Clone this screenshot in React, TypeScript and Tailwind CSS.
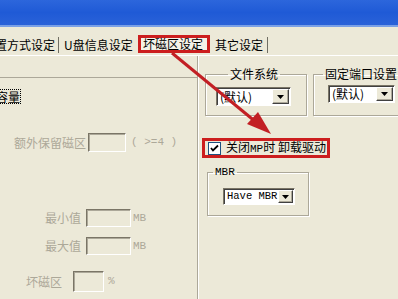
import React from "react";

const cjk = "font-['SimSun','Noto_Sans_CJK_SC',sans-serif]";
const mono = "font-['Liberation_Mono',monospace]";

function Sunken({ w, h, white }: { w: string; h: string; white?: boolean }) {
  return (
    <div
      className={`${w} ${h} shrink-0 border-t border-l border-t-[#7a7566] border-l-[#7a7566] border-b border-r border-b-white border-r-white ${
        white ? "bg-white" : "bg-[#ece9d8]"
      } shadow-[inset_1px_1px_0_#aca899]`}
    />
  );
}

function Combo({ label, w, h, labelClass }: { label: string; w: string; h?: string; labelClass?: string }) {
  return (
    <div
      className={`${w} ${h ?? "h-[19px]"} shrink-0 flex items-stretch bg-white border-t border-l border-t-[#7a7566] border-l-[#7a7566] border-b border-r border-b-white border-r-white shadow-[inset_1px_1px_0_#404040]`}
    >
      <div className={`flex-1 flex items-center pl-[3px] leading-none ${labelClass ?? ""}`}>{label}</div>
      <div className="w-[17px] m-[1px] flex items-center justify-center bg-[#ece9d8] border-t border-l border-t-white border-l-white border-b border-r border-b-[#404040] border-r-[#404040] shadow-[inset_-1px_-1px_0_#aca899]">
        <svg width="7" height="4" viewBox="0 0 7 4">
          <path d="M0 0h7L3.5 4z" fill="#000" />
        </svg>
      </div>
    </div>
  );
}

function Group({
  title,
  className,
  children,
  titleClass,
}: {
  title: string;
  className?: string;
  children: React.ReactNode;
  titleClass?: string;
}) {
  return (
    <fieldset
      className={`shrink-0 border border-[#aca899] shadow-[inset_1px_1px_0_#fff,1px_1px_0_#fff] ${className ?? ""}`}
    >
      <legend className={`px-[2px] leading-none whitespace-nowrap ${titleClass ?? ""}`}>{title}</legend>
      {children}
    </fieldset>
  );
}

function Tabs() {
  return (
    <div className="h-[28px] flex items-end">
      <div className="h-[16px] mb-[2px] w-[64px] shrink-0 ml-[-5px] border-r border-r-[#716f64] flex items-center leading-none">
        置方式设定
      </div>
      <div className="h-[16px] mb-[2px] w-[79px] shrink-0 pl-[5px] flex items-center leading-none">U盘信息设定</div>
      <div className="h-[18px] mb-[2px] w-[72px] shrink-0 border-[3px] border-[#cc1e1e] flex items-center pl-[2px] leading-none bg-[#f4f2e8]">
        坏磁区设定
      </div>
      <div className="h-[16px] mb-[2px] w-[58px] shrink-0 pl-[5px] border-r border-r-[#716f64] flex items-center leading-none">
        其它设定
      </div>
    </div>
  );
}

function LeftPanel() {
  const dis = "text-[#aca899]";
  return (
    <div className="w-[198px] shrink-0 h-full border-r border-r-[#aca899] shadow-[1px_0_0_#fff] flex flex-col">
      <div className="mt-[21px] border-t border-t-[#aca899] shadow-[inset_0_1px_0_#fff]" />
      <div className="mt-[11px] ml-[-6px] w-[27px] h-[15px] border border-dotted border-black flex items-center pl-[1px] leading-none">
        容量
      </div>
      <div className={`mt-[29px] flex items-center ${dis}`}>
        <span className="ml-[14px] w-[74px] shrink-0 leading-none">额外保留磁区</span>
        <Sunken w="w-[38px]" h="h-[19px]" />
        <span className={`ml-[5px] leading-none ${mono} text-[11px]`}>( &gt;=4 )</span>
      </div>
      <div className={`mt-[57px] flex items-center ${dis}`}>
        <span className="ml-[45px] w-[41px] shrink-0 leading-none">最小值</span>
        <Sunken w="w-[45px]" h="h-[18px]" />
        <span className={`ml-[2px] leading-none ${mono} text-[11px]`}>MB</span>
      </div>
      <div className={`mt-[10px] flex items-center ${dis}`}>
        <span className="ml-[45px] w-[41px] shrink-0 leading-none">最大值</span>
        <Sunken w="w-[45px]" h="h-[18px]" />
        <span className={`ml-[2px] leading-none ${mono} text-[11px]`}>MB</span>
      </div>
      <div className={`mt-[16px] flex items-center ${dis}`}>
        <span className="ml-[26px] w-[47px] shrink-0 leading-none">坏磁区</span>
        <Sunken w="w-[31px]" h="h-[21px]" />
        <span className={`ml-[4px] leading-none ${mono} text-[11px]`}>%</span>
      </div>
    </div>
  );
}

function RightPanel() {
  return (
    <div className="flex-1 min-w-0 flex flex-col">
      <div className="mt-[12px] flex">
        <Group title="文件系统" titleClass="ml-[12px]" className="ml-[7px] w-[102px] h-[48px] px-[10px] pt-[7px]">
          <Combo label="(默认)" w="w-[75px]" />
        </Group>
        <Group title="固定端口设置" titleClass="ml-[-5px]" className="ml-[6px] w-[100px] h-[48px] pl-[14px] pt-[5px]">
          <Combo label="(默认)" w="w-[67px]" h="h-[18px]" />
        </Group>
      </div>
      <div className="mt-[22px] ml-[4px] w-[128px] h-[20px] border-[3px] border-[#cc1e1e] flex items-center">
        <div className="ml-[3px] w-[13px] h-[13px] shrink-0 bg-white border border-[#1c5180] flex items-center justify-center">
          <svg width="9" height="9" viewBox="0 0 9 9">
            <path d="M1 4l2 2.5L8 1.5" stroke="#000" strokeWidth="1.8" fill="none" />
          </svg>
        </div>
        <span className="ml-[5px] leading-none">
          关闭<span className={`${mono} text-[11px]`}>MP</span>时 卸载驱动
        </span>
      </div>
      <Group title="MBR" titleClass={`ml-[-10px] ${mono} text-[11px]`} className="mt-[9px] ml-[9px] w-[102px] h-[49px] pl-[15px] pt-[10px]">
        <Combo label="Have MBR" w="w-[72px]" h="h-[17px]" labelClass={`${mono} text-[10.5px] pl-[2px]`} />
      </Group>
    </div>
  );
}

function Arrow() {
  return (
    <svg className="absolute left-0 top-0 pointer-events-none" width="398" height="299">
      <line x1="172" y1="53" x2="262" y2="127" stroke="#c21f24" strokeWidth="3" />
      <path d="M271 134L247 124L258 112Z" fill="#c21f24" />
    </svg>
  );
}

export default function App() {
  return (
    <div className={`relative w-[398px] h-[299px] overflow-hidden bg-[#ece9d8] text-[12px] text-black whitespace-nowrap ${cjk}`}>
      <div className="h-[27px] bg-gradient-to-b from-[#2c66dc] via-[#1f5ad6] to-[#2a62d8] border-b-2 border-b-[#7aa0e6]" />
      <Tabs />
      <div className="h-[244px] flex border-t border-t-white">
        <LeftPanel />
        <RightPanel />
      </div>
      <Arrow />
    </div>
  );
}
